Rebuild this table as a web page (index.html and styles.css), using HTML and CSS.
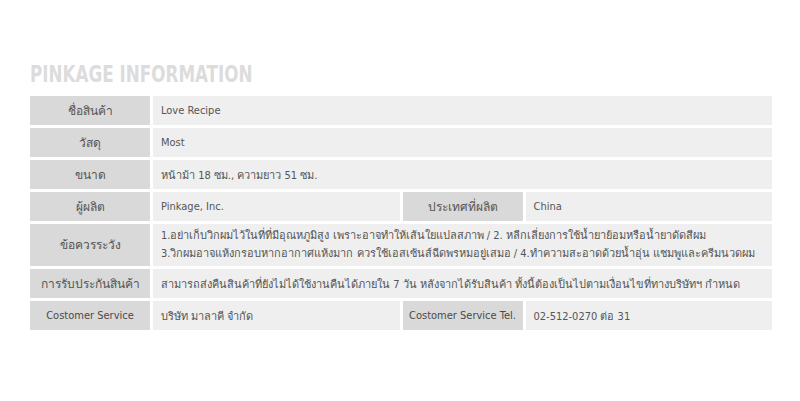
FILE: index.html
```html
<!DOCTYPE html>
<html lang="th">
<head>
    <meta charset="UTF-8">
    <meta name="viewport" content="width=device-width, initial-scale=1.0">
    <title>Pinkage Information</title>
    <link rel="stylesheet" href="styles.css">
</head>
<body>
    <section class="info">
        <h2 class="info-title">PINKAGE INFORMATION</h2>

        <div class="info-grid">
            <div class="label">ชื่อสินค้า</div>
            <div class="value wide">Love Recipe</div>

            <div class="label">วัสดุ</div>
            <div class="value wide">Most</div>

            <div class="label">ขนาด</div>
            <div class="value wide">หน้าม้า 18 ซม., ความยาว 51 ซม.</div>

            <div class="label">ผู้ผลิต</div>
            <div class="value">Pinkage, Inc.</div>
            <div class="label">ประเทศที่ผลิต</div>
            <div class="value">China</div>

            <div class="label tall">ข้อควรระวัง</div>
            <div class="value wide tall">1.อย่าเก็บวิกผมไว้ในที่ที่มีอุณหภูมิสูง เพราะอาจทำให้เส้นใยแปลสภาพ / 2. หลีกเลี่ยงการใช้น้ำยาย้อมหรือน้ำยาดัดสีผม<br>3.วิกผมอาจแห้งกรอบหากอากาศแห้งมาก ควรใช้เอสเซ้นส์ฉีดพรหมอยู่เสมอ / 4.ทำความสะอาดด้วยน้ำอุ่น แชมพูและครีมนวดผม</div>

            <div class="label">การรับประกันสินค้า</div>
            <div class="value wide">สามารถส่งคืนสินค้าที่ยังไม่ได้ใช้งานคืนได้ภายใน 7 วัน หลังจากได้รับสินค้า ทั้งนี้ต้องเป็นไปตามเงื่อนไขที่ทางบริษัทฯ กำหนด</div>

            <div class="label latin">Costomer Service</div>
            <div class="value">บริษัท มาลาคี จำกัด</div>
            <div class="label latin">Costomer Service Tel.</div>
            <div class="value">02-512-0270 ต่อ 31</div>
        </div>
    </section>
</body>
</html>
```

FILE: styles.css
```css
body {
    margin: 0;
    padding: 0;
    background: #fff;
    font-family: 'DejaVu Sans Condensed', 'Noto Sans', sans-serif;
    color: #555;
}

.info {
    padding: 62px 28px 0 30px;
}

.info-title {
    margin: 0 0 10px;
    font-family: 'DejaVu Sans Condensed', sans-serif;
    font-weight: bold;
    font-size: 23px;
    line-height: 24px;
    color: #dcdcdc;
    transform: scaleX(0.81);
    transform-origin: left center;
}

.info-grid {
    display: grid;
    grid-template-columns: 120px 1fr 120px 1fr;
    gap: 3px;
    font-size: 11px;
}

.label,
.value {
    height: 29px;
    display: flex;
    align-items: center;
}

.label {
    background: #d9d9d9;
    justify-content: center;
    font-size: 12px;
}

.label.latin {
    font-size: 11px;
    color: #4a4a4a;
}

.value {
    background: #efefef;
    padding-left: 8px;
    font-size: 11px;
}

.wide {
    grid-column: 2 / -1;
}

.tall {
    height: 42px;
    line-height: 18px;
}
```
